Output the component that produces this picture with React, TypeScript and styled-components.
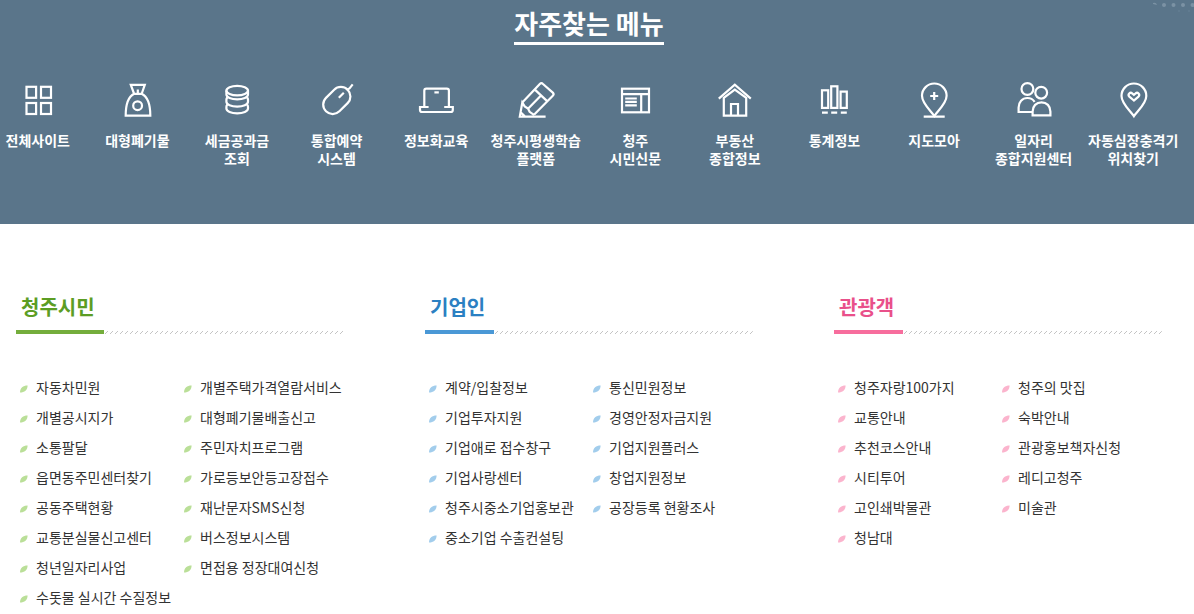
import React from 'react';
import styled, { createGlobalStyle } from 'styled-components';

const GlobalStyle = createGlobalStyle`
  * { box-sizing: border-box; }
  body {
    margin: 0;
    background: #fff;
    color: #333;
    font-family: "Noto Sans CJK KR", "Noto Sans", sans-serif;
    font-size: 14px;
    overflow-x: hidden;
  }
  h2, h3, ul { margin: 0; padding: 0; }
  ul { list-style: none; }
  a { color: inherit; text-decoration: none; }
`;

const QuickSection = styled.section`
  position: relative;
  min-height: 224px;
  padding: 5px 16px 56px 0;
  background: #5a758a;
  color: #fff;
  text-align: center;
`;

const QuickTitle = styled.h2`
  display: inline-block;
  padding-bottom: 1px;
  border-bottom: 3px solid #fff;
  font-size: 26px;
  font-weight: 700;
  line-height: 36px;
`;

const Dots = styled.svg`
  position: absolute;
  top: 0;
  right: 0;
  width: 44px;
  height: 14px;
  fill: #7b92a4;
`;

const QuickList = styled.ul`
  display: grid;
  grid-template-columns: repeat(12, minmax(0, 1fr));
  margin: 35px -5px 0 -12px;
`;

const QuickLink = styled.a`
  display: flex;
  flex-direction: column;
  align-items: center;
  gap: 11px;
  font-weight: 700;
  line-height: 18px;
  white-space: nowrap;
`;

const QuickIcon = styled.svg`
  width: 40px;
  height: 40px;
  fill: none;
  stroke: #fff;
  stroke-width: 2.2;
`;

const Groups = styled.main`
  display: grid;
  grid-template-columns: repeat(3, minmax(0, 1fr));
  gap: 81px;
  padding: 67px 32px 0 16px;
`;

const GroupHead = styled.div`
  display: flex;
  align-items: flex-end;
`;

const GroupTitle = styled.h3<{ $color: string; $line: string }>`
  flex: none;
  padding: 0 9px 7px 5px;
  border-bottom: 4px solid ${(p) => p.$line};
  color: ${(p) => p.$color};
  font-size: 20px;
  font-weight: 700;
  line-height: 32px;
`;

const Hatch = styled.svg`
  flex: 1;
  min-width: 0;
  height: 3px;
`;

const LinkList = styled.ul`
  display: grid;
  grid-template-columns: repeat(2, minmax(0, 1fr));
  margin-top: 38px;
`;

const LinkItem = styled.a`
  display: flex;
  align-items: center;
  gap: 8px;
  padding-left: 4px;
  line-height: 30px;
  white-space: nowrap;
`;

const Leaf = styled.svg<{ $color: string }>`
  flex: none;
  width: 8px;
  height: 8px;
  margin-top: 4px;
  fill: ${(p) => p.$color};
`;

const quickMenu: { label: string[]; icon: React.ReactNode }[] = [
  {
    label: ['전체사이트'],
    icon: (
      <>
        <rect x="8.5" y="6.8" width="9.6" height="11" />
        <rect x="23" y="6.8" width="10" height="11" />
        <rect x="8.5" y="23" width="9.6" height="11" />
        <rect x="23" y="23" width="10" height="11" />
      </>
    ),
  },
  {
    label: ['대형폐기물'],
    icon: (
      <>
        <path d="M17.2 14 13.8 4.8h14L24.6 14M20.8 9.5v4M17 13.8h8" />
        <path d="M17.2 13.8C11.5 16.5 8.7 24 8.7 35.7h24.6c0-11.7-3-19.2-8.7-21.9" />
        <circle cx="20.6" cy="25.7" r="4.4" />
      </>
    ),
  },
  {
    label: ['세금공과금', '조회'],
    icon: (
      <>
        <ellipse cx="20.2" cy="10.6" rx="10.8" ry="4.8" />
        <path d="M9.4 10.6v4c0 2.8 4.8 4.8 10.8 4.8s10.8-2 10.8-4.8v-4" />
        <path d="M10.4 17.2c-.7.8-1 1.600-1 2.600v2c0 2.800 4.800 4.800 10.800 4.800s10.800-2 10.800-4.800v-2c0-1-.3-1.800-1-2.600" />
        <path d="M10.4 24.400c-.7.8-1 1.600-1 2.600v1.600c0 2.800 4.800 4.800 10.800 4.800s10.800-2 10.800-4.800V27c0-1-.3-1.800-1-2.600" />
      </>
    ),
  },
  {
    label: ['통합예약', '시스템'],
    icon: (
      <>
        <rect x="10.3" y="5.2" width="19" height="30.6" rx="9.5" transform="rotate(45 19.8 20.5)" />
        <path d="m29.5 10 3-1.6 3.2-4M21.800 17.800l5-5" />
      </>
    ),
  },
  {
    label: ['정보화교육'],
    icon: (
      <>
        <path d="M8.3 27V10.8q0-2.1 2.1-2.1h20.4q2.1 0 2.1 2.1V27" />
        <path d="M12.600 27H4v3q0 2 2 2h28.800q2 0 2-2v-3h-8.600" />
        <path d="M18.400 12.400h4.400" />
      </>
    ),
  },
  {
    label: ['청주시평생학습', '플랫폼'],
    icon: (
      <>
        <path d="M6.300 22.600 23.800 4q1.600-1.600 3.200 0l9.800 8.600q1.600 1.600 0 3.200L18 34.800M18.600 9.400l12.800 12M12 28.800l13-13.400" />
        <path d="M29.600 36.600H3.800L6.300 22.600l2.400 3.800 3.300 2.200 1.600 3.200 4.400 3M4.400 32l4.400 4.400" />
      </>
    ),
  },
  {
    label: ['청주', '시민신문'],
    icon: (
      <>
        <rect x="7" y="8.7" width="27" height="23.6" />
        <path d="M7 14.2h27M26.2 14v18M10.2 18.5h11.6M10.2 21.9h11.6M10.2 25.3h11.6" />
      </>
    ),
  },
  {
    label: ['부동산', '종합정보'],
    icon: (
      <>
        <path d="M3.8 18.6 19.8 4.6l16 14" />
        <path d="M8.800 17.800v17.900h22.400V17.800L19.800 9.600Z" />
        <path d="M16 35.500V24h7v11.500" />
      </>
    ),
  },
  {
    label: ['통계정보'],
    icon: (
      <>
        <rect x="8" y="10.3" width="6.2" height="17.6" />
        <rect x="17.2" y="6.3" width="6.2" height="21.6" />
        <rect x="26.6" y="11.6" width="6.2" height="16.3" />
        <path d="M8 32.7h5.8M17.2 32.7h6M26.8 32.7h6" />
      </>
    ),
  },
  {
    label: ['지도모아'],
    icon: (
      <>
        <path d="M20.3 36C17 31 8 23.6 8 15.8a12.3 12.3 0 0 1 24.6 0C32.6 23.6 23.6 31 20.3 36Z" />
        <path d="M9.7 36.7h21M20.2 12v8M16.2 16h8" />
      </>
    ),
  },
  {
    label: ['일자리', '종합지원센터'],
    icon: (
      <>
        <circle cx="13.4" cy="9" r="5.9" />
        <circle cx="27.2" cy="12.7" r="5.9" />
        <path d="M18 32H4.6v-4.5c0-5.5 3.6-9.5 8.8-9.5 3 0 5.6 1.4 7.2 3.8" />
        <path d="M18.6 35.4v-3.8c0-5.5 3.7-9.3 8.9-9.3s8.9 3.8 8.9 9.3v3.8Z" />
      </>
    ),
  },
  {
    label: ['자동심장충격기', '위치찾기'],
    icon: (
      <>
        <path d="M20.9 36.2C17.5 31 8.5 23.6 8.5 15.9a12.4 12.4 0 0 1 24.8 0C33.3 23.6 24.3 31 20.9 36.2Z" />
        <path d="m20.9 20.5-4.6-3.9c-2-2.3.9-5 2.9-3.2l1.7 1.4 1.7-1.4c2-1.8 4.9.9 2.9 3.2Z" />
      </>
    ),
  },
];

const groups = [
  {
    title: '청주시민',
    color: '#5c9d24',
    line: '#74ad3c',
    leaf: '#badf98',
    links: [
      '자동차민원', '개별주택가격열람서비스',
      '개별공시지가', '대형폐기물배출신고',
      '소통팔달', '주민자치프로그램',
      '읍면동주민센터찾기', '가로등보안등고장접수',
      '공동주택현황', '재난문자SMS신청',
      '교통분실물신고센터', '버스정보시스템',
      '청년일자리사업', '면접용 정장대여신청',
      '수돗물 실시간 수질정보',
    ],
  },
  {
    title: '기업인',
    color: '#2b80c2',
    line: '#4a98d6',
    leaf: '#a2cdec',
    links: [
      '계약/입찰정보', '통신민원정보',
      '기업투자지원', '경영안정자금지원',
      '기업애로 접수창구', '기업지원플러스',
      '기업사랑센터', '창업지원정보',
      '청주시중소기업홍보관', '공장등록 현황조사',
      '중소기업 수출컨설팅',
    ],
  },
  {
    title: '관광객',
    color: '#e9508a',
    line: '#f76d9d',
    leaf: '#fbb4cd',
    links: [
      '청주자랑100가지', '청주의 맛집',
      '교통안내', '숙박안내',
      '추천코스안내', '관광홍보책자신청',
      '시티투어', '레디고청주',
      '고인쇄박물관', '미술관',
      '청남대',
    ],
  },
];

export default function App() {
  return (
    <>
      <GlobalStyle />
      <QuickSection>
        <QuickTitle>자주찾는 메뉴</QuickTitle>
        <Dots viewBox="0 0 44 14" aria-hidden="true">
          <path d="M3 3q3-1 4 2l-4-1z" />
          <circle cx="14" cy="5" r="2" />
          <circle cx="23.5" cy="5" r="2" />
          <circle cx="33" cy="5" r="2" />
          <circle cx="42.5" cy="5" r="2" />
          <circle cx="29" cy="11" r="1" opacity="0.3" />
          <circle cx="39" cy="11" r="1" opacity="0.3" />
        </Dots>
        <QuickList>
          {quickMenu.map((item) => (
            <li key={item.label.join(' ')}>
              <QuickLink href="#">
                <QuickIcon viewBox="0 0 40 40" aria-hidden="true">{item.icon}</QuickIcon>
                <span>
                  {item.label.map((line, i) => (
                    <React.Fragment key={line}>
                      {i > 0 && <br />}
                      {line}
                    </React.Fragment>
                  ))}
                </span>
              </QuickLink>
            </li>
          ))}
        </QuickList>
      </QuickSection>
      <Groups>
        {groups.map((group, index) => (
          <section key={group.title}>
            <GroupHead>
              <GroupTitle $color={group.color} $line={group.line}>{group.title}</GroupTitle>
              <Hatch aria-hidden="true">
                <defs>
                  <pattern id={`hatch-${index}`} width="5" height="3" patternUnits="userSpaceOnUse">
                    <path d="M1 3 4 0" stroke="#c4c4c4" strokeWidth="1" />
                  </pattern>
                </defs>
                <rect width="100%" height="3" fill={`url(#hatch-${index})`} />
              </Hatch>
            </GroupHead>
            <LinkList>
              {group.links.map((link) => (
                <li key={link}>
                  <LinkItem href="#">
                    <Leaf $color={group.leaf} viewBox="0 0 8 8" aria-hidden="true">
                      <path d="M0 7.5C0 3 3 .5 7.6.5 7.6 5 4.5 7.5 0 7.5Z" />
                    </Leaf>
                    {link}
                  </LinkItem>
                </li>
              ))}
            </LinkList>
          </section>
        ))}
      </Groups>
    </>
  );
}
